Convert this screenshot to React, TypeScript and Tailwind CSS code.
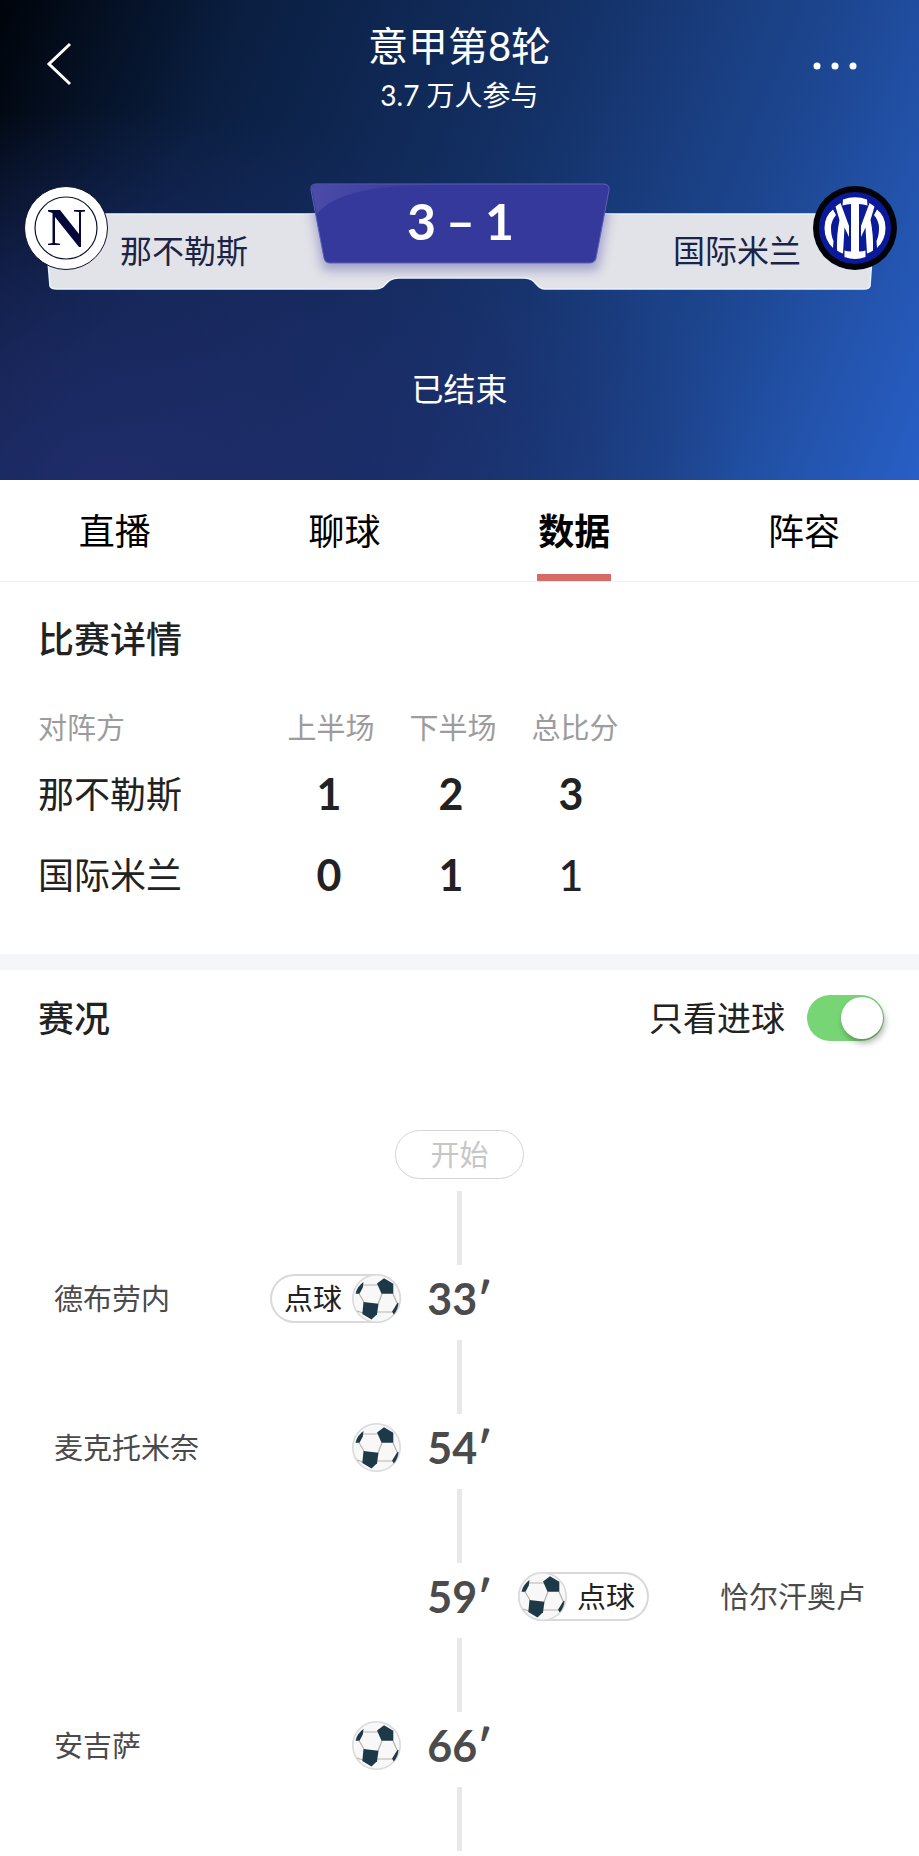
import { useState } from "react";

const tabs = ["直播", "聊球", "数据", "阵容"];

const scores = [
  { team: "那不勒斯", first: 1, second: 2, total: 3 },
  { team: "国际米兰", first: 0, second: 1, total: 1 },
];

type Goal = {
  minute: number;
  player: string;
  side: "home" | "away";
  penalty?: boolean;
};

const goals: Goal[] = [
  { minute: 33, player: "德布劳内", side: "home", penalty: true },
  { minute: 54, player: "麦克托米奈", side: "home" },
  { minute: 59, player: "恰尔汗奥卢", side: "away", penalty: true },
  { minute: 66, player: "安吉萨", side: "home" },
];

function NapoliLogo() {
  return (
    <svg viewBox="0 0 84 84" className="size-[84px] shrink-0" aria-hidden="true">
      <circle cx="42" cy="42" r="41.5" fill="#fff" stroke="#0b1030" strokeWidth="1" />
      <circle cx="42" cy="42" r="31" fill="#fff" stroke="#0b1030" strokeWidth="1.200" />
      <path
        d="M24 24h12l19 24V26l-5-.6V24h11v1.400l-4 .6v35h-2L31 31v26l5 .8V59H24v-1.200l4.500-.8V27L24 25.400z"
        fill="#05073a"
      />
    </svg>
  );
}

function InterLogo() {
  return (
    <svg viewBox="0 0 84 84" className="size-[84px] shrink-0" aria-hidden="true">
      <circle cx="42" cy="42" r="42" fill="#020308" />
      <circle cx="42" cy="42" r="36" fill="#0b1a9a" />
      <g fill="#fff">
        <path d="M30 13.500Q42 9 54 13.500L54.500 19.500Q50 18 46 18V65.500Q50 65.500 52.500 64.500L52.500 71Q42 75 31.500 71L31.500 64.500Q34 65.500 38 65.500V18Q34 18 29.500 19.500z" />
        <path d="M22.500 20.500L27.500 17L36 40V51L31.500 41.500L30 67.500Q26.500 66.500 24 64.500Q23.500 48 26.500 34z" />
        <path d="M61.500 20.500L56.500 17L48 40V51L52.500 41.500L54 67.500Q57.500 66.500 60 64.500Q60.500 48 57.500 34z" />
        <path d="M20 23.500Q11.500 30 11.500 42Q11.500 54 20 62L20.500 55Q18 50 18 42Q18 35 23 29z" />
        <path d="M64 23.500Q72.500 30 72.500 42Q72.500 54 64 62L63.500 55Q66 50 66 42Q66 35 61 29z" />
      </g>
    </svg>
  );
}

function Football() {
  return (
    <svg viewBox="0 0 49 49" className="size-[49px] shrink-0" aria-hidden="true">
      <circle cx="24.500" cy="24.500" r="23.700" fill="#f8f8f8" stroke="#d9dadd" strokeWidth="1.600" />
      <path
        d="M11 11H26M7 19.700L12 28M30 19.700L26 30M41 19.700L45 29M25 38H40M5 37L11 39"
        fill="none"
        stroke="#b5b4aa"
        strokeWidth="1.200"
      />
      <g fill="#1d3947">
        <path d="M25 9.500L32 4.300L41.300 9.700L41.300 19.700L29.500 19.700z" />
        <path d="M11.500 28L26.500 29.700L25 40.300L19.500 45.500L10.300 40z" />
        <path d="M3.500 19.700Q5 12.500 11.500 8L10.800 13.500L7.500 19.700z" />
        <path d="M40 37.700L45.500 28.700L46.500 29Q46 35.500 41.800 40.500z" />
      </g>
    </svg>
  );
}

function Scoreboard() {
  return (
    <div className="relative mt-[67px] h-[110px]">
      <svg
        viewBox="0 0 919 110"
        preserveAspectRatio="none"
        className="absolute inset-0 size-full overflow-visible"
        aria-hidden="true"
      >
        <defs>
          <linearGradient id="shine" x1="0" y1="0" x2="1" y2="0">
            <stop offset="0" stopColor="#4b4ba8" />
            <stop offset="1" stopColor="#35399b" />
          </linearGradient>
          <filter id="soft" x="-10%" y="-20%" width="120%" height="160%">
            <feGaussianBlur stdDeviation="6" />
          </filter>
          <clipPath id="bar">
            <path d="M44 32H875L870 104Q869 107 864 107H545C535 107 537 96 524 96H399C384 96 388 107 375 107H57Q51 107 50 104z" />
          </clipPath>
        </defs>
        <path
          d="M44 32H875L870 104Q869 107 864 107H545C535 107 537 96 524 96H399C384 96 388 107 375 107H57Q51 107 50 104z"
          fill="#e2e3e8"
          stroke="#e9f4ff"
          strokeWidth="1.500"
        />
        <g clipPath="url(#bar)">
          <path d="M310 10H611L598 88H323z" fill="#35399b" opacity="0.400" filter="url(#soft)" />
        </g>
        <path
          d="M316 2H603Q610 2 609 8L596 76Q595 81 589 81H330Q325 81 324 76L311 8Q310 2 316 2z"
          fill="#35399b"
          stroke="#5c60b4"
          strokeWidth="1"
        />
        <path d="M316 3H440Q340 2 317 32L312 8Q311 3 316 3z" fill="url(#shine)" />
      </svg>
      <div className="relative grid h-full grid-cols-[1fr_301px_1fr] pr-[22px] pl-6">
        <div className="flex items-start gap-3 pt-1">
          <NapoliLogo />
          <span className="pt-[41px] text-[32px] leading-[48px] text-[#1b2346]">那不勒斯</span>
        </div>
        <div className="flex h-[78px] items-center justify-center gap-2.5 text-[50px] leading-none font-bold text-white">
          <span>3</span>
          <span>–</span>
          <span>1</span>
        </div>
        <div className="flex items-start justify-end gap-3 pt-1">
          <span className="pt-[41px] text-[32px] leading-[48px] text-[#1b2346]">国际米兰</span>
          <InterLogo />
        </div>
      </div>
    </div>
  );
}

function MatchHeader() {
  return (
    <header className="h-[480px] bg-[radial-gradient(ellipse_at_12%_100%,#1f2c69_0%,#1e2c6a99_28%,#1e2c6a00_55%),linear-gradient(112deg,#00040a_0%,#0a1e40_22%,#132f63_50%,#1d4690_76%,#285fc6_100%)] text-white">
      <div className="grid h-[115px] grid-cols-[1fr_auto_1fr] items-start">
        <button type="button" aria-label="返回" className="mt-10 ml-11 w-fit p-0.5">
          <svg viewBox="0 0 28 44" className="h-11 w-7" fill="none" stroke="#fff" strokeWidth="3">
            <path d="M24 2L3 22L24 42" />
          </svg>
        </button>
        <div className="flex flex-col items-center">
          <h1 className="mt-4 text-[40px] leading-[60px]">意甲第8轮</h1>
          <p className="text-[28px] leading-[38px]">3.7 万人参与</p>
        </div>
        <button type="button" aria-label="更多" className="mt-14 mr-14 w-fit justify-self-end p-1">
          <svg viewBox="0 0 48 12" className="h-3 w-12" fill="#fff">
            <circle cx="6" cy="6" r="3.500" />
            <circle cx="24" cy="6" r="3.500" />
            <circle cx="42" cy="6" r="3.500" />
          </svg>
        </button>
      </div>
      <Scoreboard />
      <p className="mt-[73px] text-center text-[32px] leading-[48px]">已结束</p>
    </header>
  );
}

function Timeline({ items }: { items: Goal[] }) {
  return (
    <div className="flex flex-col items-center pt-16">
      <span className="rounded-full border border-[#d4d4d4] px-[34px] text-[29px] leading-[47px] text-[#c6c6c6]">
        开始
      </span>
      <ul className="mt-3 w-full">
        {items.map((goal) => (
          <li key={goal.minute}>
            <div className="mx-auto h-[74px] w-[5px] bg-[#e8e8e8]" />
            <GoalRow goal={goal} />
          </li>
        ))}
      </ul>
      <div className="h-16 w-[5px] bg-[#e8e8e8]" />
    </div>
  );
}

function GoalRow({ goal }: { goal: Goal }) {
  const home = goal.side === "home";
  const name = <span className="text-[29px] text-[#4a4a4a]">{goal.player}</span>;
  const ball = goal.penalty ? (
    <span
      className={`flex items-center rounded-full text-[29px] text-[#222] shadow-[inset_0_0_0_2px_#d9d9d9] ${
        home ? "pl-3.5" : "flex-row-reverse pr-3.5"
      }`}
    >
      <span className={home ? "pr-2.5" : "pl-2.5"}>点球</span>
      <Football />
    </span>
  ) : (
    <Football />
  );

  return (
    <div className="mb-2 grid h-[67px] grid-cols-[1fr_117px_1fr] items-center leading-[49px]">
      <div className="flex items-center justify-between pl-[54px]">
        {home && name}
        {home && ball}
      </div>
      <time className="text-center text-[43px] leading-[47px] font-bold text-[#4b4b4b]">{goal.minute}′</time>
      <div className="flex items-center justify-between pr-[54px]">
        {!home && ball}
        {!home && name}
      </div>
    </div>
  );
}

export default function App() {
  const [active, setActive] = useState("数据");
  const [goalsOnly, setGoalsOnly] = useState(true);

  return (
    <div className="min-h-screen bg-white pb-1 font-['Lato','Noto_Sans_CJK_SC',sans-serif] text-[#222]">
      <MatchHeader />

      <nav className="grid h-[102px] grid-cols-4 border-b border-[#f0f0f0] text-black">
        {tabs.map((tab) => (
          <button
            key={tab}
            type="button"
            onClick={() => setActive(tab)}
            className={`flex flex-col items-center justify-between pt-6 text-[36px] leading-[54px] ${
              active === tab ? "font-bold" : ""
            }`}
          >
            {tab}
            <span className={`h-[7px] w-[74px] ${active === tab ? "bg-[#d66a67]" : ""}`} />
          </button>
        ))}
      </nav>

      <section className="h-[372px] px-[38px] pt-[30px]">
        <h2 className="text-[36px] leading-[54px] font-medium">比赛详情</h2>
        <table className="mt-9 table-fixed text-center">
          <thead>
            <tr className="h-[51px] text-[29px] text-[#9c9c9c]">
              <th className="w-[232px] text-left font-normal">对阵方</th>
              <th className="w-[122px] font-normal">上半场</th>
              <th className="w-[122px] font-normal">下半场</th>
              <th className="w-[122px] font-normal">总比分</th>
            </tr>
          </thead>
          <tbody>
            {scores.map((row) => (
              <tr key={row.team} className="h-[81px] text-[43px] leading-[54px] font-bold">
                <th className="text-left text-[36px] font-normal">{row.team}</th>
                <td className="pr-1">{row.first}</td>
                <td className="pr-1">{row.second}</td>
                <td className={`pr-2 ${row.total === 1 ? "font-medium" : ""}`}>{row.total}</td>
              </tr>
            ))}
          </tbody>
        </table>
      </section>

      <div className="h-4 bg-[#f5f6f8]" />

      <section>
        <div className="flex h-24 items-center justify-between pr-[35px] pl-[38px]">
          <h2 className="text-[36px] leading-[54px] font-medium">赛况</h2>
          <label className="flex items-center gap-[22px] text-[34px] leading-[54px]">
            只看进球
            <span className="relative flex">
              <input
                type="checkbox"
                role="switch"
                checked={goalsOnly}
                onChange={(e) => setGoalsOnly(e.target.checked)}
                className="peer h-[46px] w-[77px] appearance-none rounded-full bg-gray-300 checked:bg-[#78d575]"
              />
              <span className="pointer-events-none absolute top-0.5 left-0.5 size-[42px] rounded-full bg-white shadow-[2px_4px_6px_rgba(0,0,0,0.3)] peer-checked:left-[34px]" />
            </span>
          </label>
        </div>
        <Timeline items={goals} />
      </section>
    </div>
  );
}
